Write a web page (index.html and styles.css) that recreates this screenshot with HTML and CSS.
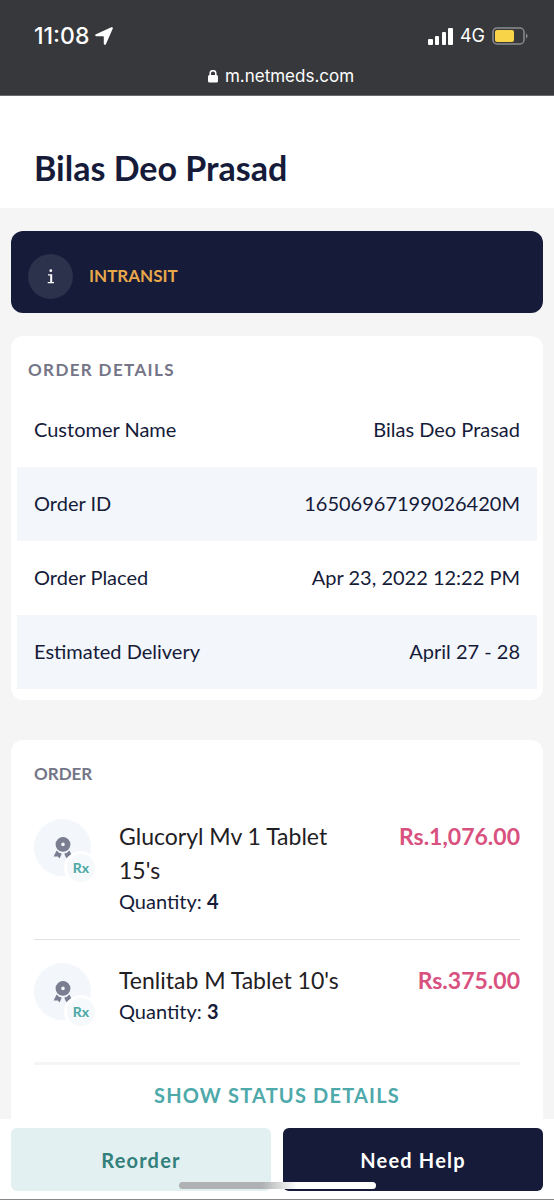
FILE: index.html
```html
<!DOCTYPE html>
<html lang="en">
<head>
<meta charset="utf-8">
<meta name="viewport" content="width=device-width, initial-scale=1">
<title>Order Details</title>
<link rel="stylesheet" href="styles.css">
</head>
<body>
<svg class="sprite" aria-hidden="true">
  <symbol id="medal" viewBox="0 0 20 22">
    <path fill-rule="evenodd" d="M10 0a7.400 7.400 0 1 0 0 14.800a7.400 7.400 0 1 0 0-14.800zM10 5.600a1.800 1.800 0 1 1 0 3.600a1.800 1.800 0 1 1 0-3.600z"/>
    <path d="M3.600 13.400Q5.600 16 8.800 16.400L6.600 21.600L4.800 19.400L.6 19.600zM16.400 13.400Q14.400 16 11.200 16.400L13.400 21.600L15.200 19.400L19.400 19.600z"/>
  </symbol>
</svg>
<header class="status">
  <div class="status-row">
    <div class="clock"><span>11:08</span>
      <svg width="18" height="18" viewBox="0 0 18 18"><path d="M16.300.3L1 7.200C-.4 7.900-.1 9.300 1.300 9.300H8.200c.4 0 .6.2.6.6V16.600c0 1.500 1.600 1.700 2.200.4L17.700 1.800C18.200.7 17.300-.2 16.300.3z" fill="#fff"/></svg>
    </div>
    <div class="signals">
      <svg width="25" height="17" viewBox="0 0 25 17" fill="#fff"><rect y="11" width="5" height="6" rx="1"/><rect x="7" y="8" width="4" height="9" rx="1"/><rect x="14" y="4" width="4" height="13" rx="1"/><rect x="20" width="5" height="17" rx="1"/></svg>
      <span>4G</span>
      <svg width="36" height="18" viewBox="0 0 36 18"><rect x="1" y="1" width="31" height="16" rx="4" fill="none" stroke="#8b8c8f" stroke-width="1.500"/><rect x="3" y="3" width="19" height="12" rx="2" fill="#f8d448"/><path d="M34 6.500c2 .8 2 4.200 0 5z" fill="#8b8c8f"/></svg>
    </div>
  </div>
  <div class="address">
    <svg width="10" height="13" viewBox="0 0 10 13"><path d="M2.200 6V3.500a2.800 2.800 0 0 1 5.600 0V6" fill="none" stroke="#fff" stroke-width="1.500"/><rect y="5" width="10" height="7.500" rx="1.500" fill="#fff"/></svg>
    <span>m.netmeds.com</span>
  </div>
</header>

<div class="title"><h1>Bilas Deo Prasad</h1></div>

<main class="content">
  <section class="banner">
    <span class="info"><svg width="8" height="15" viewBox="0 0 8 15" fill="#fff"><circle cx="3.800" cy="1.700" r="1.400"/><path d="M1 5.200h4.200v7.700H7V14.300H.7V12.900H3.200V6.600H1z"/></svg></span>
    <span class="state">INTRANSIT</span>
  </section>

  <section class="card details">
    <h2 class="details-title">ORDER DETAILS</h2>
    <dl class="rows">
      <div class="row"><dt>Customer Name</dt><dd>Bilas Deo Prasad</dd></div>
      <div class="row"><dt>Order ID</dt><dd>16506967199026420M</dd></div>
      <div class="row"><dt>Order Placed</dt><dd>Apr 23, 2022 12:22 PM</dd></div>
      <div class="row"><dt>Estimated Delivery</dt><dd>April 27 - 28</dd></div>
    </dl>
  </section>

  <section class="card order">
    <h2 class="order-title">ORDER</h2>
    <article class="item">
      <div class="thumb"><svg width="20" height="22"><use href="#medal"/></svg><span class="rx">Rx</span></div>
      <div class="info-text"><h3>Glucoryl Mv 1 Tablet 15's</h3><p>Quantity: <b>4</b></p></div>
      <div class="price">Rs.1,076.00</div>
    </article>
    <article class="item">
      <div class="thumb"><svg width="20" height="22"><use href="#medal"/></svg><span class="rx">Rx</span></div>
      <div class="info-text"><h3>Tenlitab M Tablet 10's</h3><p>Quantity: <b>3</b></p></div>
      <div class="price">Rs.375.00</div>
    </article>
    <button class="show" type="button">SHOW STATUS DETAILS</button>
  </section>
</main>

<footer class="actions">
  <button class="action reorder" type="button">Reorder</button>
  <button class="action help" type="button">Need Help</button>
  <span class="home-bar"></span>
</footer>
</body>
</html>
```
FILE: styles.css
```css
* { box-sizing: border-box; }
body, h1, h2, h3, p, dl, dd { margin: 0; }
body {
  min-height: 100vh;
  display: flex;
  flex-direction: column;
  background: #f5f5f5;
  color: #151b39;
  font: 20px/28px Lato, sans-serif;
}
button { border: 0; font-family: inherit; cursor: pointer; }
.sprite { position: absolute; width: 0; height: 0; }

.status {
  height: 96px;
  padding: 22px 26px 0 34px;
  background: #37383b;
  border-bottom: 1px solid #68696c;
  color: #fff;
  font-family: Inter, sans-serif;
}
.status-row, .clock, .signals, .address { display: flex; align-items: center; }
.status-row { justify-content: space-between; }
.clock { gap: 6px; font-size: 23px; font-weight: 500; }
.signals { gap: 7px; font-size: 18px; }
.address { justify-content: center; gap: 7px; margin-top: 14px; font-size: 17px; line-height: 24px; }

.title { padding: 52px 34px 20px; background: #fff; }
.title h1 { font-size: 34px; line-height: 40px; font-weight: 700; }

.content { flex: 1; display: flex; flex-direction: column; padding: 23px 11px 0; }
.banner {
  display: flex;
  align-items: center;
  gap: 16px;
  height: 82px;
  padding: 8px 17px 0;
  margin-bottom: 23px;
  border-radius: 12px;
  background: #151b39;
}
.info {
  display: flex;
  align-items: center;
  justify-content: center;
  width: 45px;
  height: 45px;
  border-radius: 50%;
  background: #2c314c;
}
.state { color: #e9a849; font-size: 17px; font-weight: 700; }

.card { border-radius: 12px; background: #fff; }
h2 { color: #747587; font-size: 17px; line-height: 24px; font-weight: 700; }
.details { padding: 22px 6px 11px; margin-bottom: 40px; }
.details-title { padding: 0 11px 11px; letter-spacing: 0.08em; }
.row { display: flex; justify-content: space-between; gap: 16px; padding: 22px 17px 24px; }
.row:nth-child(even) { background: #f3f6fb; }
.row dd { text-align: right; }

.order { flex: 1; display: flex; flex-direction: column; padding: 22px 23px 0; border-radius: 12px 12px 0 0; }
.order-title { margin-bottom: 10px; }
.item { display: flex; align-items: flex-start; padding: 23px 0; border-bottom: 1px solid #e2e2e3; }
.item:first-of-type { padding-bottom: 24px; }
.item:last-of-type { padding-bottom: 37px; border-bottom: 3px solid #f5f5f6; }
.thumb {
  position: relative;
  flex: none;
  display: flex;
  align-items: center;
  justify-content: center;
  width: 57px;
  height: 57px;
  margin-right: 28px;
  border-radius: 50%;
  background: #f3f6fb;
  fill: #7b7d91;
}
.rx {
  position: absolute;
  right: -7px;
  bottom: -9px;
  width: 34px;
  height: 34px;
  border: 3px solid #fff;
  border-radius: 50%;
  background: #f5f9fc;
  color: #4aa7a4;
  font-size: 14px;
  line-height: 28px;
  font-weight: 700;
  text-align: center;
}
.info-text { flex: 1; padding-right: 32px; }
h3 { color: #1f2024; font-size: 23px; line-height: 34px; font-weight: 400; }
.price { color: #d8517f; font-size: 23px; line-height: 34px; font-weight: 700; }
.show {
  padding: 16px 0 10px;
  background: none;
  color: #4ea9aa;
  font-size: 20px;
  line-height: 28px;
  font-weight: 700;
  letter-spacing: 0.06em;
}

.actions {
  position: relative;
  display: flex;
  gap: 12px;
  padding: 9px 11px 8px;
  background: #fff;
  border-bottom: 1px solid #88898b;
}
.action { flex: 1; height: 63px; border-radius: 6px; font-size: 20px; font-weight: 700; letter-spacing: 0.06em; }
.reorder { background: #e2f0f1; color: #337f7c; }
.help { background: #151b39; color: #fff; }
.home-bar {
  position: absolute;
  left: 50%;
  bottom: 10px;
  width: 197px;
  height: 7px;
  margin-left: -98px;
  border-radius: 4px;
  background: linear-gradient(90deg, #afb1b2 42%, #fff 60%);
}
```
